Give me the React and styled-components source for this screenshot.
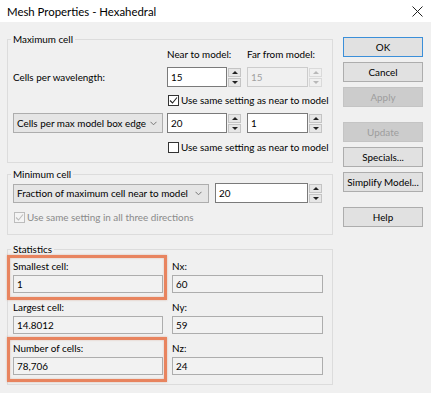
import React from 'react';
import styled, { createGlobalStyle, css } from 'styled-components';

const Global = createGlobalStyle`
  html, body { margin: 0; padding: 0; background: #f0f0f0; }
  body {
    font-family: Lato, "Noto Sans", "Liberation Sans", sans-serif;
    font-size: 9.9px;
    color: #000;
    white-space: nowrap;
  }
  * { box-sizing: border-box; }
`;

const Window = styled.div`
  width: 431px;
  height: 393px;
  background: #f0f0f0;
  display: flex;
  flex-direction: column;
  overflow: hidden;
`;

const TitleBar = styled.div`
  height: 22px;
  flex: none;
  background: #ffffff;
  display: flex;
  align-items: center;
  justify-content: space-between;
  padding: 0 8px 0 7px;
  font-size: 11.4px;
`;

const CloseIcon = () => (
  <svg width="11" height="11" viewBox="0 0 11 11">
    <path d="M0.5 0.5 L10.5 10.5 M10.5 0.5 L0.5 10.5" stroke="#222" strokeWidth="1" />
  </svg>
);

const Body = styled.div`
  display: flex;
  padding: 10px 0 0 7px;
  gap: 10px;
`;

const LeftCol = styled.div`
  width: 326px;
  display: flex;
  flex-direction: column;
`;

const Group = styled.fieldset`
  margin: ${(p) => p.$mt || 0}px 0 0 0;
  border: 1px solid #dcdcdc;
  padding: ${(p) => p.$pad};
  min-width: 0;
`;

const Legend = styled.legend`
  padding: 0 2px;
  margin-left: -2px;
  line-height: 14px;
`;

const MaxGrid = styled.div`
  display: grid;
  grid-template-columns: 148px 74px 75px;
  grid-template-rows: 20px 20px 26px 20px 28px;
  column-gap: 6px;
  align-items: center;
`;

const Header = styled.div`
  align-self: start;
  line-height: 14px;
`;

const Label = styled.div`
  line-height: 14px;
`;

const SpinBox = styled.div`
  display: flex;
  height: ${(p) => p.$h || 20}px;
  width: ${(p) => (p.$w ? `${p.$w}px` : 'auto')};
  gap: 1px;
`;

const SpinField = styled.div`
  flex: 1;
  border: 1px solid ${(p) => (p.$disabled ? '#cccccc' : '#7a7a7a')};
  background: ${(p) => (p.$disabled ? '#f0f0f0' : '#ffffff')};
  color: ${(p) => (p.$disabled ? '#a0a0a0' : '#000')};
  padding-left: 3px;
  display: flex;
  align-items: center;
`;

const SpinArrows = styled.div`
  width: 13px;
  display: flex;
  flex-direction: column;
  justify-content: center;
  gap: 1px;
`;

const SpinBtn = styled.div`
  height: 9px;
  border: 1px solid ${(p) => (p.$disabled ? '#dadada' : '#c4c4c4')};
  background: ${(p) => (p.$disabled ? '#f0f0f0' : '#e6e6e6')};
  display: flex;
  align-items: center;
  justify-content: center;
  &::after {
    content: '';
    width: 0;
    height: 0;
    border-left: 3px solid transparent;
    border-right: 3px solid transparent;
    ${(p) =>
      p.$down
        ? css`border-top: 3px solid ${p.$disabled ? '#b8b8b8' : '#222'};`
        : css`border-bottom: 3px solid ${p.$disabled ? '#b8b8b8' : '#222'};`}
  }
`;

const Spinner = ({ value, disabled, w, h }) => (
  <SpinBox $w={w} $h={h}>
    <SpinField $disabled={disabled}>{value}</SpinField>
    <SpinArrows>
      <SpinBtn $disabled={disabled} />
      <SpinBtn $disabled={disabled} $down />
    </SpinArrows>
  </SpinBox>
);

const Combo = styled.div`
  width: ${(p) => p.$w}px;
  height: ${(p) => p.$h || 20}px;
  background: #e5e5e5;
  border: 1px solid #adadad;
  display: flex;
  align-items: center;
  justify-content: space-between;
  padding: 0 6px 0 3px;
  gap: 4px;
`;

const Chevron = () => (
  <svg width="7" height="5" viewBox="0 0 7 5" style={{ flex: 'none' }}>
    <path d="M0.5 0.8 L3.5 3.8 L6.5 0.8" stroke="#777" strokeWidth="1" fill="none" />
  </svg>
);

const CheckRow = styled.div`
  grid-column: ${(p) => p.$col || 'auto'};
  display: flex;
  align-items: center;
  gap: 2px;
  color: ${(p) => (p.$disabled ? '#8a8a8a' : '#000')};
  margin-left: 1px;
`;

const Box = styled.span`
  width: 11px;
  height: 11px;
  border: 1px solid ${(p) => (p.$disabled ? '#bcbcbc' : '#333333')};
  background: ${(p) => (p.$disabled ? '#f4f4f4' : '#ffffff')};
  display: flex;
  align-items: center;
  justify-content: center;
  flex: none;
`;

const Check = ({ checked, disabled, children, col }) => (
  <CheckRow $col={col} $disabled={disabled}>
    <Box $disabled={disabled}>
      {checked && (
        <svg width="9" height="9" viewBox="0 0 9 9">
          <path d="M1 4.5 L3.5 7 L8 1.5" stroke={disabled ? '#bcbcbc' : '#222'} strokeWidth="1.1" fill="none" />
        </svg>
      )}
    </Box>
    <span>{children}</span>
  </CheckRow>
);

const MinRow = styled.div`
  display: flex;
  align-items: center;
  gap: 6px;
  height: 22px;
  margin-top: 1px;
`;

const MinCheckRow = styled.div`
  height: 22px;
  display: flex;
  align-items: center;
  margin-top: 2px;
`;

const StatsGrid = styled.div`
  display: grid;
  grid-template-columns: 150px 151px;
  column-gap: 9px;
  row-gap: 7px;
`;

const Cell = styled.div`
  position: relative;
  display: flex;
  flex-direction: column;
  gap: 2px;
  ${(p) =>
    p.$highlight &&
    css`
      &::after {
        content: '';
        position: absolute;
        top: -4px;
        left: -6px;
        right: -4px;
        bottom: -7px;
        border: 3px solid #e8845f;
        box-shadow: 0 0 2px rgba(180, 80, 40, 0.35), inset 0 0 2px rgba(180, 80, 40, 0.35);
        pointer-events: none;
      }
    `}
`;

const ReadOnly = styled.div`
  height: 18px;
  border: 1px solid #adadad;
  background: #f2f2f2;
  padding-left: 3px;
  display: flex;
  align-items: center;
`;

const RightCol = styled.div`
  width: 80px;
  display: flex;
  flex-direction: column;
  padding-top: 5px;
`;

const Button = styled.div`
  height: 20px;
  margin-top: ${(p) => p.$mt ?? 5}px;
  display: flex;
  align-items: center;
  justify-content: center;
  border: 1px solid ${(p) => (p.$default ? '#3b8fd9' : p.$disabled ? '#c4c4c4' : '#adadad')};
  background: ${(p) => (p.$disabled ? '#cccccc' : '#e1e1e1')};
  color: ${(p) => (p.$disabled ? '#9d9d9d' : '#000')};
`;

const StatCell = ({ label, value, highlight }) => (
  <Cell $highlight={highlight}>
    <Label>{label}</Label>
    <ReadOnly>{value}</ReadOnly>
  </Cell>
);

export default function App() {
  return (
    <Window>
      <Global />
      <TitleBar>
        <span>Mesh Properties - Hexahedral</span>
        <CloseIcon />
      </TitleBar>
      <Body>
        <LeftCol>
          <Group $pad="1px 5px 1px 5px">
            <Legend>Maximum cell</Legend>
            <MaxGrid>
              <span />
              <Header>Near to model:</Header>
              <Header>Far from model:</Header>
              <Label>Cells per wavelength:</Label>
              <Spinner value="15" />
              <Spinner value="15" disabled />
              <span />
              <Check checked col="2 / 4">Use same setting as near to model</Check>
              <Combo $w={150}>
                <span>Cells per max model box edge</span>
                <Chevron />
              </Combo>
              <Spinner value="20" />
              <Spinner value="1" />
              <span />
              <Check col="2 / 4">Use same setting as near to model</Check>
            </MaxGrid>
          </Group>
          <Group $mt={4} $pad="0 5px 6px 5px">
            <Legend>Minimum cell</Legend>
            <MinRow>
              <Combo $w={196} $h={19}>
                <span>Fraction of maximum cell near to model</span>
                <Chevron />
              </Combo>
              <Spinner value="20" w={107} h={20} />
            </MinRow>
            <MinCheckRow>
              <Check checked disabled>Use same setting in all three directions</Check>
            </MinCheckRow>
          </Group>
          <Group $mt={7} $pad="3px 5px 9px 5px">
            <Legend>Statistics</Legend>
            <StatsGrid>
              <StatCell label="Smallest cell:" value="1" highlight />
              <StatCell label="Nx:" value="60" />
              <StatCell label="Largest cell:" value="14.8012" />
              <StatCell label="Ny:" value="59" />
              <StatCell label="Number of cells:" value="78,706" highlight />
              <StatCell label="Nz:" value="24" />
            </StatsGrid>
          </Group>
        </LeftCol>
        <RightCol>
          <Button $default $mt={0}>OK</Button>
          <Button>Cancel</Button>
          <Button $disabled>Apply</Button>
          <Button $disabled $mt={15}>Update</Button>
          <Button>Specials...</Button>
          <Button>Simplify Model...</Button>
          <Button $mt={15}>Help</Button>
        </RightCol>
      </Body>
    </Window>
  );
}
